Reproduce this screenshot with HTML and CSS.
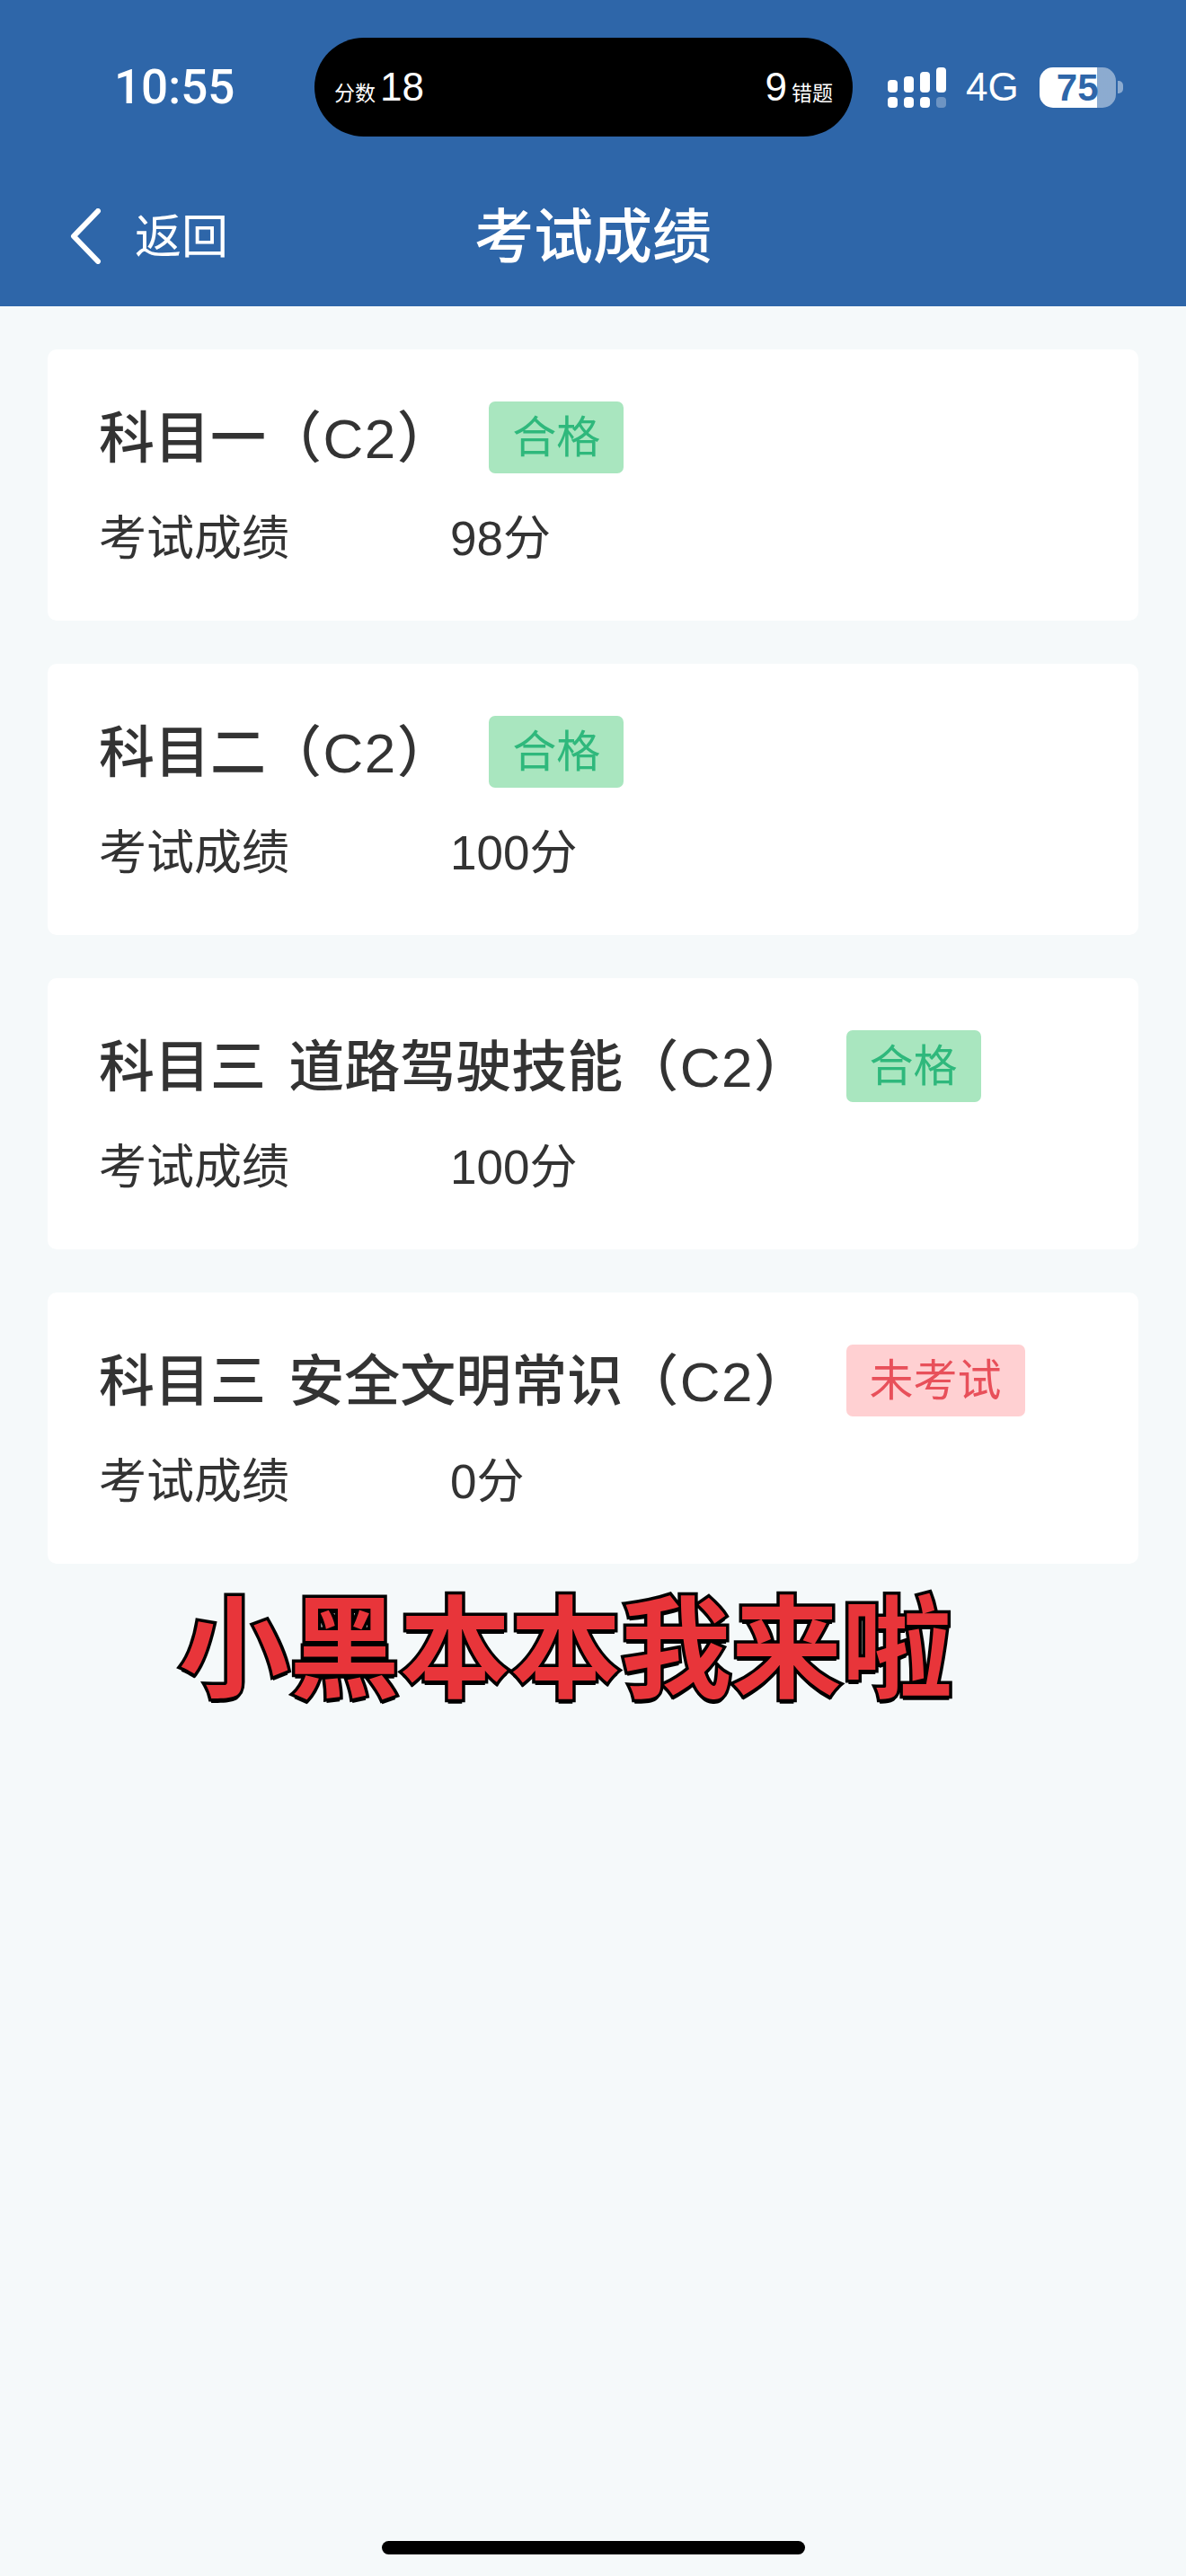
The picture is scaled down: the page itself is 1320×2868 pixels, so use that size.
FILE: index.html
```html
<!DOCTYPE html>
<html>
<head>
<meta http-equiv="Content-Type" content="text/html; charset=utf-8"/>
<title>考试成绩</title>
<link rel="stylesheet" href="styles.css">
</head>

<body>
<div class="header">
  <div class="status">
    <div class="time">10:55</div>
    <div class="pill">
      <div class="pill-item"><span class="pill-label">分数</span><span class="pill-num">18</span></div>
      <div class="pill-item"><span class="pill-num">9</span><span class="pill-label">错题</span></div>
    </div>
    <div class="status-right">
      <svg class="signal" width="65" height="45" viewBox="0 0 65 45">
        <rect x="0" y="14" width="11" height="14" rx="4" fill="#fff"/>
        <rect x="18" y="10" width="11" height="18" rx="4" fill="#fff"/>
        <rect x="36" y="5" width="11" height="23" rx="4" fill="#fff"/>
        <rect x="54" y="0" width="11" height="28" rx="4" fill="#fff"/>
        <rect x="0" y="33" width="11" height="12" rx="4" fill="#fff"/>
        <rect x="18" y="33" width="11" height="12" rx="4" fill="#fff"/>
        <rect x="36" y="33" width="11" height="12" rx="4" fill="#fff"/>
        <rect x="54" y="33" width="11" height="12" rx="4" fill="#fff" fill-opacity="0.3"/>
      </svg>
      <div class="net">4G</div>
      <div class="battery">75</div>
      <div class="battery-nub"></div>
    </div>
  </div>
  <div class="nav">
    <div class="back">
      <svg width="36" height="62" viewBox="0 0 36 62">
        <path d="M32 3 L5 31 L32 59" fill="none" stroke="#fff" stroke-width="6" stroke-linecap="round" stroke-linejoin="round"/>
      </svg>
      <span class="back-text">返回</span>
    </div>
    <div class="nav-title">考试成绩</div>
  </div>
</div>

<div class="list">
  <div class="card">
    <div class="card-top">
      <div class="card-title">科目一<span class="grade">（C2）</span></div>
      <div class="badge pass">合格</div>
    </div>
    <div class="card-row"><span class="row-label">考试成绩</span><span>98分</span></div>
  </div>
  <div class="card">
    <div class="card-top">
      <div class="card-title">科目二<span class="grade">（C2）</span></div>
      <div class="badge pass">合格</div>
    </div>
    <div class="card-row"><span class="row-label">考试成绩</span><span>100分</span></div>
  </div>
  <div class="card">
    <div class="card-top">
      <div class="card-title">科目三 道路驾驶技能<span class="grade">（C2）</span></div>
      <div class="badge pass">合格</div>
    </div>
    <div class="card-row"><span class="row-label">考试成绩</span><span>100分</span></div>
  </div>
  <div class="card">
    <div class="card-top">
      <div class="card-title">科目三 安全文明常识<span class="grade">（C2）</span></div>
      <div class="badge fail">未考试</div>
    </div>
    <div class="card-row"><span class="row-label">考试成绩</span><span>0分</span></div>
  </div>
</div>

<div class="caption">小黑本本我来啦</div>
<div class="home-bar"></div>
</body>
</html>
```

FILE: styles.css
```css
* {
  box-sizing: border-box;
}

html, body {
  margin: 0;
  padding: 0;
}

body {
  position: relative;
  width: 1320px;
  height: 2868px;
  overflow: hidden;
  background-color: #f5f9fa;
  color: #333;
  font-family: "Liberation Sans", "Noto Sans CJK SC", sans-serif;
}

.header {
  height: 341px;
  padding-top: 42px;
  background-color: #2e66a9;
  color: #fff;
}

.status {
  display: flex;
  align-items: center;
  height: 110px;
}

.time {
  flex: none;
  width: 350px;
  padding-left: 127px;
  font-family: Roboto, "Liberation Sans", sans-serif;
  font-size: 53px;
  font-weight: 500;
  line-height: 60px;
}

.pill {
  display: flex;
  flex: none;
  justify-content: space-between;
  align-items: center;
  width: 599px;
  height: 110px;
  padding: 0 22px;
  border-radius: 55px;
  background-color: #000;
}

.pill-item {
  display: flex;
  align-items: flex-end;
  gap: 5px;
}

.pill-num {
  font-size: 44px;
  line-height: 44px;
}

.pill-label {
  font-size: 23px;
  line-height: 30px;
}

.status-right {
  display: flex;
  align-items: center;
  margin-left: 39px;
}

.net {
  margin-left: 22px;
  font-size: 44px;
  line-height: 50px;
}

.battery {
  width: 85px;
  height: 45px;
  margin-left: 23px;
  border-radius: 15px;
  background: linear-gradient(to right, #fff 75%, rgba(255, 255, 255, 0.45) 75%);
  color: #2e66a9;
  font-size: 42px;
  font-weight: bold;
  line-height: 45px;
  text-align: center;
}

.battery-nub {
  width: 6px;
  height: 14px;
  margin-left: 2px;
  border-radius: 0 5px 5px 0;
  background-color: rgba(255, 255, 255, 0.45);
}

.nav {
  display: flex;
  align-items: center;
  height: 82px;
  margin-top: 70px;
  padding-left: 77px;
}

.back {
  display: flex;
  align-items: center;
  width: 451px;
}

.back-text {
  margin-left: 37px;
  padding-top: 2px;
  font-size: 52px;
  line-height: 60px;
}

.nav-title {
  padding-top: 2px;
  font-size: 66px;
  font-weight: 500;
  line-height: 80px;
}

.list {
  display: flex;
  flex-direction: column;
  gap: 48px;
  padding: 48px 53px 0 53px;
}

.card {
  height: 302px;
  padding: 58px 0 0 57px;
  border-radius: 10px;
  background-color: #fff;
}

.card-top {
  display: flex;
  align-items: center;
  height: 80px;
}

.card-title {
  padding-top: 4px;
  font-size: 62px;
  font-weight: 500;
  line-height: 76px;
  white-space: nowrap;
  word-spacing: 8px;
}

.grade {
  letter-spacing: 1.5px;
}

.badge {
  height: 80px;
  margin-left: 39px;
  padding: 2px 26px 0 26px;
  border-radius: 7px;
  font-size: 49px;
  line-height: 76px;
  white-space: nowrap;
}

.pass {
  background-color: #a9e6bf;
  color: #2fb87c;
}

.fail {
  background-color: #ffd0d2;
  color: #e8505a;
}

.card-row {
  display: flex;
  margin-top: 43px;
  font-size: 53px;
  line-height: 60px;
}

.row-label {
  width: 391px;
}

/* caption burned into the video frame, sits over the page */
.caption {
  position: absolute;
  left: 199px;
  top: 1748px;
  color: #e8353a;
  font-size: 123px;
  font-weight: 700;
  line-height: 180px;
  white-space: nowrap;
  -webkit-text-stroke: 7px #000;
  paint-order: stroke fill;
  text-shadow: 0 5px 0 #000;
}

.home-bar {
  position: absolute;
  left: 425px;
  top: 2829px;
  width: 471px;
  height: 15px;
  border-radius: 8px;
  background-color: #000;
}
```
